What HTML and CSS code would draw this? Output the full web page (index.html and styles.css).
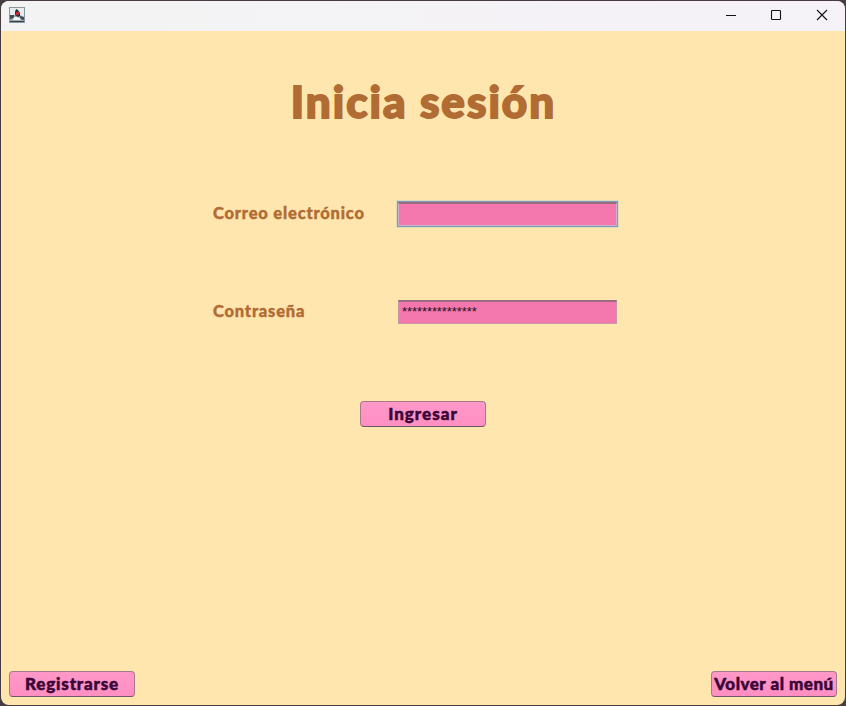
FILE: index.html
```html
<!DOCTYPE html>
<html lang="es">
<head>
<meta charset="utf-8">
<title>Inicia sesión</title>
<link rel="stylesheet" href="styles.css">
</head>
<body>
<div class="window">
  <header class="titlebar">
    <svg class="app-icon" width="16" height="16" viewBox="0 0 16 16">
      <rect x=".5" y=".5" width="15" height="15" fill="#e6edf0" stroke="#8b989f"/>
      <path d="M1 9l4-1 6 0 4 2v4H1z" fill="#9ba9af"/>
      <path d="M7 2l2 1 2 3 0 3-2 1-3-2 0-3z" fill="#252832"/>
      <path d="M1 8l4 0v3l-4 1zM11 9l4 1v3l-4-1z" fill="#424c55"/>
      <path d="M5 10l3 0 3 1 1 2H4z" fill="#f2f5f6"/>
      <circle cx="8.500" cy="6.500" r="1.900" fill="#c42a3c"/>
      <path d="M1 14.500h14" stroke="#334149"/>
    </svg>
    <div class="controls">
      <svg width="12" height="12" viewBox="0 0 12 12"><path d="M1 6.500h10"/></svg>
      <svg width="12" height="12" viewBox="0 0 12 12"><rect x="1.500" y="1.500" width="9" height="9" rx=".8"/></svg>
      <svg width="12" height="12" viewBox="0 0 12 12"><path d="M1 1l10 10M11 1L1 11"/></svg>
    </div>
  </header>
  <main class="content">
    <h1 class="title">Inicia sesión</h1>
    <form class="form">
      <label class="label" for="email">Correo electrónico</label>
      <input class="field focused" id="email" type="text">
      <label class="label" for="password">Contraseña</label>
      <input class="field" id="password" type="text" value="***************">
    </form>
    <button class="button submit" type="button">Ingresar</button>
    <footer class="actions">
      <button class="button register" type="button">Registrarse</button>
      <button class="button back" type="button">Volver al menú</button>
    </footer>
  </main>
</div>
</body>
</html>
```
FILE: styles.css
```css
* { box-sizing: border-box; }
body {
  margin: 0;
  height: 706px;
  padding: 1px;
  background: #463c42;
  overflow: hidden;
  font-family: Lato, sans-serif;
}
.window {
  height: 704px;
  display: flex;
  flex-direction: column;
  border-radius: 8px;
  overflow: hidden;
  background: #ffe6ae;
}
.titlebar {
  height: 30px;
  flex: none;
  display: flex;
  justify-content: space-between;
  padding: 6px 17px 0 8px;
  background: linear-gradient(90deg, #f3f3f3, #f5f2f8);
}
.controls {
  display: flex;
  gap: 33px;
  padding-top: 2px;
}
.controls svg:last-child { margin-left: 1px; }
.controls svg {
  fill: none;
  stroke: #111;
  stroke-width: 1.1;
}
.content {
  flex: 1;
  display: flex;
  flex-direction: column;
  align-items: center;
  padding: 40px 8px 8px;
}
.title {
  margin: 0;
  height: 60px;
  line-height: 60px;
  font-size: 44px;
  font-weight: 900;
  color: #b16c34;
  white-space: nowrap;
  letter-spacing: 2px;
  text-indent: 1px;
  -webkit-text-stroke: 1.8px #b16c34;
}
.form {
  display: grid;
  grid-template-columns: 184px 221px;
  grid-template-rows: 27px 27px;
  row-gap: 71px;
  align-items: center;
  margin-top: 68px;
  margin-right: 15px;
}
.label {
  font-size: 16.5px;
  font-weight: 900;
  line-height: 20px;
  color: #b16c34;
  white-space: nowrap;
  letter-spacing: .8px;
  -webkit-text-stroke: .4px #b16c34;
}
.field {
  width: 219px;
  height: 24px;
  margin: 2px 1px 0;
  padding: 0 3px 1px;
  border: 1px solid #c898a8;
  border-top: 2px solid #9a6c7d;
  background: #f478ae;
  color: #26101c;
  font: 12.8px "Liberation Sans", sans-serif;
  outline: none;
}
.focused {
  border-color: #9a6c7d #ccb0cc #ccb0cc;
  box-shadow: 0 0 0 1px #7b9cbc, 0 0 0 2px #dddcb8;
}
.button {
  width: 126px;
  height: 26px;
  padding: 0;
  border: 1px solid #a6788c;
  border-bottom-color: #70566b;
  border-radius: 4px;
  background: linear-gradient(#ff98c8, #ff8fc2);
  color: #3b0638;
  font: 900 17px/22px Lato, sans-serif;
  letter-spacing: .8px;
  white-space: nowrap;
  -webkit-text-stroke: .5px #3b0638;
}
.submit {
  margin-top: 77px;
  letter-spacing: 1px;
}
.back { letter-spacing: .5px; }
.actions {
  width: 100%;
  display: flex;
  justify-content: space-between;
  margin-top: auto;
}
```
